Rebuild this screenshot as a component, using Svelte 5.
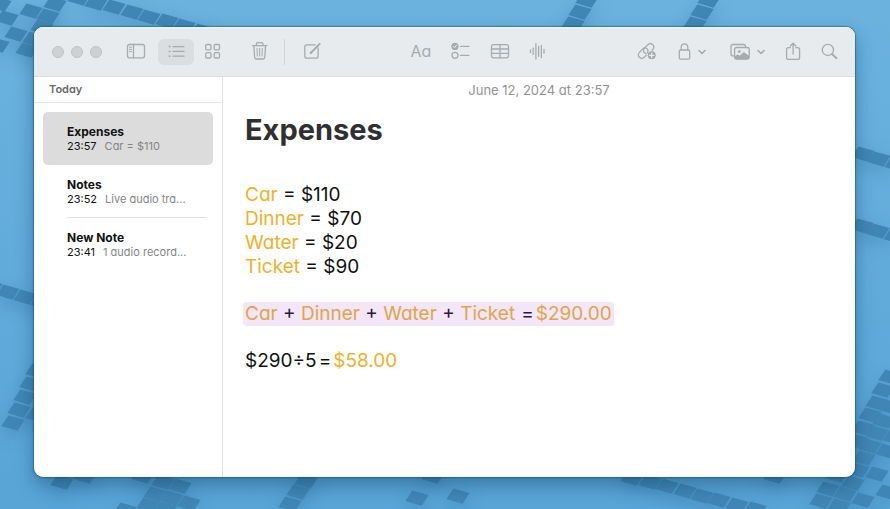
<script>
  const notes = [
    { title: 'Expenses', time: '23:57', preview: 'Car = $110' },
    { title: 'Notes', time: '23:52', preview: 'Live audio tra...' },
    { title: 'New Note', time: '23:41', preview: '1 audio record...' }
  ];
  let selected = $state(0);

  const entries = [
    ['Car', '$110'],
    ['Dinner', '$70'],
    ['Water', '$20'],
    ['Ticket', '$90']
  ];

  // centres of the slanted wallpaper tiles
  const tiles = [
    [79, -2], [96, 3], [114, 7], [132, 12], [149, 17], [167, 21], [184, 26], [202, 31],
    [55, 4], [48, 16], [42, 27], [31, 11], [7, 18], [0, 4], [16, 34], [34, 39], [27, 50], [-2, 45],
    [-9, 287], [8, 292], [25, 297], [42, 302],
    [37, 371], [31, 384], [25, 397], [19, 410], [13, 423], [37, 415],
    [62, 482], [85, 476], [143, 476], [163, 482], [180, 486], [155, 494], [172, 498], [189, 503],
    [148, 505], [165, 509], [125, 510],
    [306, 481], [298, 492], [290, 504],
    [433, 476], [417, 498], [458, 496],
    [632, 478], [650, 482], [667, 486], [685, 491], [702, 496], [719, 500], [737, 505], [755, 509],
    [775, 476], [837, 475], [853, 483], [828, 489], [845, 494], [863, 500], [821, 501], [839, 506],
    [877, 474], [887, 492],
    [863, 154], [879, 159], [896, 164], [862, 226], [878, 231], [895, 236],
    [890, 377], [883, 390], [877, 403], [870, 415], [863, 428], [857, 441],
    [891, 407], [884, 421], [877, 433], [870, 446], [864, 458], [858, 470],
    [894, 437], [887, 451],
    [573, 24], [580, 12], [587, 0], [695, 24], [702, 12], [709, 0]
  ];
</script>

{#snippet chevron(x)}
  <path d="M{x} 10.5l3 3 3-3" stroke-width="1.6" />
{/snippet}

<div class="desktop">
  <svg class="wallpaper" viewBox="0 0 890 509" preserveAspectRatio="xMidYMid slice" aria-hidden="true">
    {#each tiles as [x, y]}
      <path d="M{x - 4.6} {y - 7.6}l16.2 4.6-7 10.7-16.2-4.7z" />
    {/each}
  </svg>

  <div class="window">
    <header>
      <div class="group">
        <div class="lights"><i></i><i></i><i></i></div>
        <button class="tool" aria-label="Toggle sidebar">
          <svg viewBox="0 0 24 24">
            <rect x="3.5" y="4.5" width="17" height="13.3" rx="2" />
            <path d="M9.5 4.5v13.3" />
            <path d="M5.4 7.2h2.2M5.4 9.4h2.2M5.4 11.6h2.2" stroke-width="1" />
          </svg>
        </button>
        <button class="tool list active" aria-label="List view">
          <svg viewBox="0 0 24 24">
            <path d="M9 6.6h11M9 11.4h11M9 16.2h11" />
            <g class="solid"><circle cx="5.5" cy="6.6" r="1" /><circle cx="5.5" cy="11.4" r="1" /><circle cx="5.5" cy="16.2" r="1" /></g>
          </svg>
        </button>
        <button class="tool" aria-label="Gallery view">
          <svg viewBox="0 0 24 24">
            <rect x="5.7" y="4.5" width="5.3" height="5.3" rx="1.2" />
            <rect x="14.2" y="4.5" width="5.3" height="5.3" rx="1.2" />
            <rect x="5.7" y="12.7" width="5.3" height="5.3" rx="1.2" />
            <rect x="14.2" y="12.7" width="5.3" height="5.3" rx="1.2" />
          </svg>
        </button>
        <button class="tool trash" aria-label="Delete">
          <svg viewBox="0 0 24 24">
            <path d="M4.5 5.6h14.4M8.4 5.4V4.1c0-.9.5-1.4 1.4-1.4h3.8c.9 0 1.4.5 1.4 1.4v1.3M5.9 5.8l.7 11.5c.1 1.1.7 1.7 1.8 1.7H15c1.1 0 1.7-.6 1.8-1.7l.7-11.5" />
            <path d="M9.1 8.3l.2 7.8M11.7 8.3v7.8M14.3 8.3l-.2 7.8" stroke-width="1" />
          </svg>
        </button>
        <span class="divider"></span>
        <button class="tool" aria-label="New note">
          <svg viewBox="0 0 24 24">
            <path d="M15.2 4.9H7c-1.4 0-2.2.8-2.2 2.2v8.9c0 1.4.8 2.2 2.2 2.2h8.9c1.4 0 2.2-.8 2.2-2.2V8" />
            <path d="M11.2 12.5l6.9-7M19 4.6l.7-.8" stroke-width="1.8" />
            <path d="M10.3 13.4l.5-1.3.9.8z" />
          </svg>
        </button>
      </div>

      <div class="group middle">
        <button class="tool text" aria-label="Format">Aa</button>
        <button class="tool" aria-label="Checklist">
          <svg viewBox="0 0 24 24">
            <circle class="solid" cx="7" cy="6.4" r="3.6" />
            <path d="M5.5 6.5l1.1 1.3 1.9-2.7" stroke="#e7ebee" stroke-width="1" />
            <circle cx="7" cy="15.3" r="3" />
            <path d="M12.6 6.4h8.3M12.6 15.3h8.3" />
          </svg>
        </button>
        <button class="tool" aria-label="Table">
          <svg viewBox="0 0 24 24">
            <rect x="4.5" y="4.6" width="17" height="13.2" rx="2" />
            <path d="M4.5 9h17M4.5 13.4h17M13 4.6v13.2" />
          </svg>
        </button>
        <button class="tool" aria-label="Record audio">
          <svg viewBox="0 0 24 24">
            <path d="M4.5 10v2.6M7.2 8.2v6.2M9.9 3.6v15.4M12.6 6.5v9.8M15.3 5.3v12.2M18 9.4v3.8" />
          </svg>
        </button>
      </div>

      <div class="group">
        <button class="tool" aria-label="Add link">
          <svg viewBox="0 0 24 24">
            <path d="M8.6 8.2l-4 3.9c-1.6 1.6-1.7 3.8-.3 5.2 1.4 1.4 3.6 1.3 5.2-.3l1.7-1.7M8.6 8.2c1.5-.6 3.1-.3 3.9.9.8 1.2.7 2.6-.2 3.9" />
            <path d="M11 13.6c-1.5-.4-2.5-1.5-2.5-3 0-1 .4-1.9 1.2-2.7l2.9-2.9c1.6-1.6 3.8-1.7 5.2-.3 1.4 1.4 1.3 3.4-.2 5l-.5.5" />
            <circle class="solid" cx="16.7" cy="15.3" r="4" />
            <path d="M16.7 13.1v4.4M14.5 15.3h4.4" stroke="#e7ebee" />
          </svg>
        </button>
        <button class="tool lock" aria-label="Lock note">
          <svg class="wide" viewBox="0 0 36 24">
            <rect x="4.3" y="10" width="10.4" height="9.2" rx="1.5" />
            <path d="M6.2 10V7.5c0-2.2 1.3-3.6 3.3-3.6s3.3 1.4 3.3 3.6V10" />
            {@render chevron(24)}
          </svg>
        </button>
        <button class="tool media" aria-label="Media">
          <svg class="wider" viewBox="0 0 44 24">
            <path d="M8.5 15.9H8c-1.3 0-2-.7-2-2V6.5c0-1.3.7-2 2-2h10.5c1.3 0 2 .7 2 2v.2" />
            <rect x="9.6" y="7.5" width="14.6" height="11.6" rx="2" />
            <path class="solid" d="M9.8 16.5l2.4-1.8c.5-.4.9-.4 1.3 0l1.1 1 3.5-3c.6-.5 1.1-.5 1.7 0l4.2 3.4v1.5c0 1-.7 1.7-1.8 1.7H11.5c-1.1 0-1.7-.7-1.7-1.7z" />
            <circle class="solid" cx="14.3" cy="11.6" r="1.4" />
            {@render chevron(33)}
          </svg>
        </button>
        <button class="tool share" aria-label="Share">
          <svg viewBox="0 0 24 24">
            <path d="M9.2 7.7H7.5c-1.2 0-1.9.7-1.9 1.9v7.9c0 1.2.7 1.9 1.9 1.9h9.2c1.2 0 1.9-.7 1.9-1.9V9.6c0-1.2-.7-1.9-1.9-1.9H15M12.1 14V3.6M9.4 6l2.7-2.7L14.8 6" />
          </svg>
        </button>
        <button class="tool" aria-label="Search">
          <svg viewBox="0 0 24 24">
            <circle cx="10.9" cy="9.9" r="5.6" />
            <path d="M15 14l4.5 4.3" stroke-width="1.9" />
          </svg>
        </button>
      </div>
    </header>

    <div class="body">
      <aside>
        <h2>Today</h2>
        <div class="notes">
          {#each notes as note, i (note.time)}
            <button class="note" class:selected={selected === i} onclick={() => (selected = i)}>
              <strong>{note.title}</strong>
              <span class="meta"><span>{note.time}</span><span class="preview">{note.preview}</span></span>
            </button>
          {/each}
        </div>
      </aside>

      <main>
        <time datetime="2024-06-12T23:57">June 12, 2024 at 23:57</time>
        <article>
          <h1>Expenses</h1>
          <div class="entries">
            {#each entries as [name, amount]}
              <p><em>{name}</em> = {amount}</p>
            {/each}
          </div>
          <p class="sum">
            {#each entries as [name], i}{#if i > 0}{' + '}{/if}<em>{name}</em>{/each}<span class="eq">=</span><em>$290.00</em>
          </p>
          <p>$290÷5<span class="eq near">=</span><em>$58.00</em></p>
        </article>
      </main>
    </div>
  </div>
</div>

<style>
  :global(body) {
    margin: 0;
  }
  .desktop {
    display: grid;
    min-height: 100vh;
    background: linear-gradient(#6bb2df, #58a5d6);
    font-family: Inter, sans-serif;
    font-feature-settings: 'cv11';
  }
  .wallpaper,
  .window {
    grid-area: 1 / 1;
  }
  .wallpaper {
    width: 100%;
    height: 100vh;
    fill: #4086b4;
    filter: drop-shadow(0 6px 8px rgba(20, 80, 130, 0.25));
  }
  .window {
    display: flex;
    flex-direction: column;
    margin: 27px 35px 32px 34px;
    border-radius: 9px;
    overflow: hidden;
    background: #fff;
    box-shadow:
      0 0 1px 1px rgba(0, 80, 130, 0.5),
      0 8px 18px rgba(10, 50, 90, 0.4);
    z-index: 1;
  }
  header {
    display: flex;
    justify-content: space-between;
    align-items: center;
    box-sizing: border-box;
    height: 50px;
    padding: 0 8px 0 18px;
    background: #e7ebee;
    border-top: 1px solid #f6f8f9;
    border-bottom: 1px solid #dcdfe1;
  }
  .group {
    display: flex;
    align-items: center;
  }
  .middle {
    gap: 3px;
  }
  .lights {
    display: flex;
    gap: 7px;
    margin-right: 16px;
  }
  .lights i {
    box-sizing: border-box;
    width: 12px;
    height: 12px;
    border: 1px solid #bfc3c5;
    border-radius: 50%;
    background: #ced1d3;
  }
  .tool {
    display: grid;
    place-items: center;
    width: 36px;
    height: 26px;
    padding: 0;
    border: 0;
    border-radius: 6px;
    background: none;
    color: #a6abae;
    font: inherit;
  }
  .tool.active {
    background: #dadee0;
  }
  .list {
    margin-left: 4px;
  }
  .trash {
    margin-left: 12px;
  }
  .tool.text {
    padding-bottom: 2px;
    font-size: 16px;
  }
  .lock {
    margin: 0 14px 0 10px;
  }
  .media {
    width: 44px;
  }
  .share {
    margin-left: 6px;
  }
  .divider {
    width: 1px;
    height: 26px;
    margin: 0 9px 0 6px;
    background: #d2d6d9;
  }
  .tool svg {
    width: 24px;
    height: 24px;
    fill: none;
    stroke: currentColor;
    stroke-width: 1.3;
    stroke-linecap: round;
    stroke-linejoin: round;
  }
  .tool svg.wide {
    width: 36px;
  }
  .tool svg.wider {
    width: 44px;
  }
  .tool .solid {
    fill: currentColor;
    stroke: none;
  }
  .body {
    display: flex;
    flex: 1;
  }
  aside {
    flex: none;
    width: 188px;
    border-right: 1px solid #e3e3e3;
  }
  h2 {
    margin: 0;
    padding: 0 15px;
    border-bottom: 1px solid #e6e6e6;
    color: #6a6a6a;
    font-size: 11px;
    font-weight: 600;
    line-height: 25px;
  }
  .notes {
    padding: 9px;
  }
  .note {
    display: block;
    width: 100%;
    height: 53px;
    padding: 0 6px 0 24px;
    border: 0;
    border-radius: 5px;
    background: none;
    color: #111;
    font: inherit;
    font-size: 12px;
    line-height: 15px;
    text-align: left;
  }
  .note.selected {
    background: #dcdcdc;
  }
  /* hairline only between two unselected notes */
  .note:not(.selected):has(+ .note:not(.selected)) {
    background: linear-gradient(#e2e2e2, #e2e2e2) 24px 100% / 140px 1px no-repeat;
  }
  .note strong {
    display: block;
    font-weight: 700;
  }
  .meta {
    display: flex;
    gap: 8px;
    font-size: 11px;
  }
  .preview {
    color: #858585;
    white-space: nowrap;
  }
  main {
    flex: 1;
    min-width: 0;
  }
  time {
    display: block;
    color: #929292;
    font-size: 13px;
    line-height: 27px;
    text-align: center;
  }
  article {
    padding: 8px 22px;
    color: #111;
    font-size: 19px;
    line-height: 24px;
  }
  h1 {
    margin: 0 0 35px;
    color: #303032;
    font-size: 29px;
    font-weight: 700;
    line-height: 36px;
  }
  p {
    margin: 0;
  }
  em {
    color: #f0b02c;
    font-style: normal;
  }
  .sum {
    width: fit-content;
    margin: 23px 0 23px -2px;
    padding: 0 2px;
    border-radius: 4px;
    background: #f2e6f8;
    color: #2a1a3c;
  }
  .sum em {
    color: #e2a548;
  }
  .eq {
    margin: 0 2px 0 6px;
  }
  .eq.near {
    margin-left: 2px;
  }
</style>
